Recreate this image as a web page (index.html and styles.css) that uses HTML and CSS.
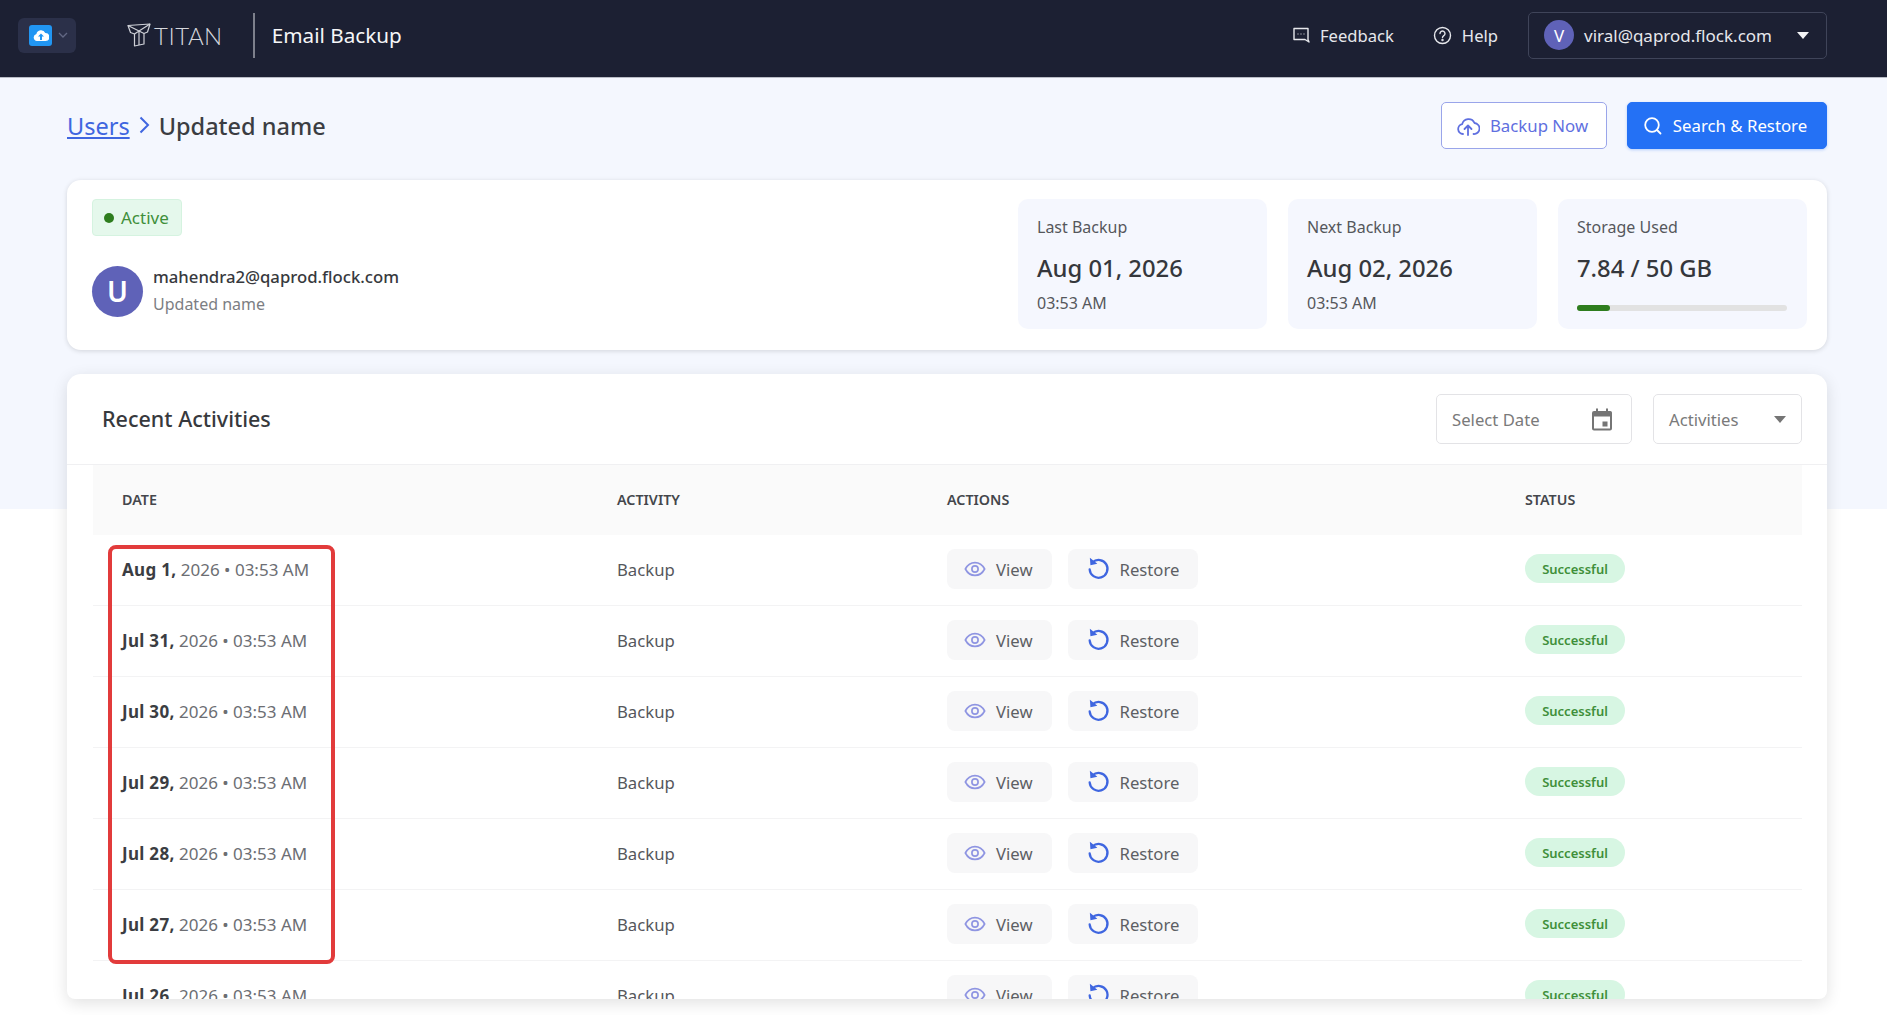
FILE: index.html
```html
<!DOCTYPE html>
<html lang="en">
<head>
    <meta charset="UTF-8">
    <meta name="viewport" content="width=device-width, initial-scale=1.0">
    <title>Email Backup</title>
    <link rel="stylesheet" href="styles.css">
</head>
<body>
    <svg class="icon-defs" width="0" height="0">
        <symbol id="i-eye" viewBox="0 0 24 24"><path d="M1.5 12C4 7.2 7.6 5 12 5s8 2.200 10.500 7C20 16.800 16.400 19 12 19S4 16.800 1.500 12z" fill="none" stroke="currentColor" stroke-width="1.800"/><circle cx="12" cy="12" r="3.400" fill="none" stroke="currentColor" stroke-width="1.800"/></symbol>
        <symbol id="i-restore" viewBox="0 0 24 24"><path d="M5.800 5.500A9.300 9.300 0 1 1 2.800 13" fill="none" stroke="currentColor" stroke-width="2.400" stroke-linecap="round"/><path d="M3 .8l.6 7.700 7.200-1.400z" fill="currentColor"/></symbol>
    </svg>

    <!-- Top bar -->
    <header class="topbar">
        <div class="topbar-left">
            <button class="app-switch">
                <span class="app-icon">
                    <svg width="16" height="12" viewBox="0 0 16 12"><path d="M4 12a3.500 3.500 0 0 1-.6-6.900A4.700 4.700 0 0 1 12.300 4 4 4 0 0 1 12.500 12z" fill="#fff"/><path d="M8 4.500L5 7.500h2V11h2V7.500h2z" fill="#2196f3"/></svg>
                </span>
                <svg width="12" height="8" viewBox="0 0 12 8"><path d="M2 2l4 4 4-4" fill="none" stroke="#626884" stroke-width="1.300"/></svg>
            </button>
            <div class="brand">
                <svg width="24" height="24" viewBox="0 0 24 24" fill="none" stroke="#cfd1d8" stroke-width="1.200" stroke-linejoin="round"><path d="M1 2.500L23 1l-2.500 8-3.500 1.500V21l-9.500 2V11L3.500 9.500z"/><path d="M1 2.500L12 8l11-7M12 8v14M7.500 11L12 8l5 2.500"/></svg>
                <span class="brand-name">TITAN</span>
            </div>
            <span class="app-title">Email Backup</span>
        </div>
        <nav class="topbar-right">
            <a class="top-link">
                <svg width="18" height="18" viewBox="0 0 18 18" fill="none" stroke="#e6e7ec" stroke-width="1.400" stroke-linejoin="round"><path d="M2 2.500h14V13.500l1 2.500-4-2.500H2z"/><path d="M5.500 8h1M8.500 8h1M11.500 8h1" stroke-width="1.200"/></svg>
                Feedback
            </a>
            <a class="top-link">
                <svg width="19" height="19" viewBox="0 0 19 19" fill="none" stroke="#e6e7ec" stroke-width="1.400"><circle cx="9.500" cy="9.500" r="8"/><path d="M7 7.500a2.500 2.500 0 1 1 3.800 2.100c-.9.600-1.300 1-1.300 2" stroke-linecap="round"/><circle cx="9.500" cy="14" r=".5"/></svg>
                Help
            </a>
            <div class="user-menu">
                <span class="user-avatar">V</span>
                <span class="user-email">viral@qaprod.flock.com</span>
                <span class="caret caret-white"></span>
            </div>
        </nav>
    </header>

    <main class="page">
        <div class="page-head">
            <div class="crumbs">
                <a class="crumb-link">Users</a>
                <svg class="crumb-sep" width="13" height="20" viewBox="0 0 13 20"><path d="M2.500 2.500L10 10l-7.500 7.500" fill="none" stroke="#3f66e0" stroke-width="2"/></svg>
                <span class="crumb-current">Updated name</span>
            </div>
            <div class="page-actions">
                <button class="btn btn-outline">
                    <svg width="24" height="20" viewBox="0 0 24 20" fill="none" stroke="currentColor" stroke-width="1.800" stroke-linecap="round" stroke-linejoin="round"><path d="M7 18a5 5 0 0 1-.8-9.900A6.500 6.500 0 0 1 18.500 7a5.500 5.500 0 0 1-1 11"/><path d="M12 19v-9M8.500 13L12 9.500l3.500 3.500"/></svg>
                    Backup Now
                </button>
                <button class="btn btn-primary">
                    <svg width="20" height="20" viewBox="0 0 20 20" fill="none" stroke="currentColor" stroke-width="1.800" stroke-linecap="round"><circle cx="9" cy="9" r="6.800"/><path d="M14 14l3.500 3.500"/></svg>
                    Search &amp; Restore
                </button>
            </div>
        </div>

        <!-- User summary -->
        <section class="card summary">
            <div class="summary-user">
                <span class="badge-active"><i class="dot"></i>Active</span>
                <div class="user-row">
                    <span class="avatar-big">U</span>
                    <div>
                        <div class="user-mail">mahendra2@qaprod.flock.com</div>
                        <div class="user-name">Updated name</div>
                    </div>
                </div>
            </div>
            <div class="stat">
                <div class="stat-label">Last Backup</div>
                <div class="stat-value">Aug 01, 2026</div>
                <div class="stat-sub">03:53 AM</div>
            </div>
            <div class="stat">
                <div class="stat-label">Next Backup</div>
                <div class="stat-value">Aug 02, 2026</div>
                <div class="stat-sub">03:53 AM</div>
            </div>
            <div class="stat">
                <div class="stat-label">Storage Used</div>
                <div class="stat-value">7.84 / 50 GB</div>
                <div class="progress"><div class="progress-fill" style="width: 15.700%"></div></div>
            </div>
        </section>

        <!-- Activity table -->
        <section class="card activities">
            <div class="activities-head">
                <h2>Recent Activities</h2>
                <div class="filters">
                    <div class="filter filter-date">
                        <span>Select Date</span>
                        <svg width="20" height="24" viewBox="0 0 20 24"><path d="M4 1.500h2V4h8V1.500h2V4h1.500A2 2 0 0 1 20 6v15.500a2 2 0 0 1-2 2H2a2 2 0 0 1-2-2V6a2 2 0 0 1 2-2h2zM2 9.500v12h16v-12z" fill="#757575"/><rect x="10.500" y="14.500" width="5" height="5" fill="#757575"/></svg>
                    </div>
                    <div class="filter filter-type">
                        <span>Activities</span>
                        <span class="caret caret-grey"></span>
                    </div>
                </div>
            </div>

            <div class="table">
                <div class="row row-head">
                    <div>DATE</div>
                    <div>ACTIVITY</div>
                    <div>ACTIONS</div>
                    <div>STATUS</div>
                </div>

                <div class="row">
                    <div class="cell-date"><b>Aug 1,</b> 2026 • 03:53 AM</div>
                    <div>Backup</div>
                    <div class="cell-actions">
                        <button class="act"><svg class="eye"><use href="#i-eye"/></svg>View</button>
                        <button class="act act-restore"><svg class="restore"><use href="#i-restore"/></svg>Restore</button>
                    </div>
                    <div class="cell-status"><span class="pill">Successful</span></div>
                </div>
                <div class="row">
                    <div class="cell-date"><b>Jul 31,</b> 2026 • 03:53 AM</div>
                    <div>Backup</div>
                    <div class="cell-actions">
                        <button class="act"><svg class="eye"><use href="#i-eye"/></svg>View</button>
                        <button class="act act-restore"><svg class="restore"><use href="#i-restore"/></svg>Restore</button>
                    </div>
                    <div class="cell-status"><span class="pill">Successful</span></div>
                </div>
                <div class="row">
                    <div class="cell-date"><b>Jul 30,</b> 2026 • 03:53 AM</div>
                    <div>Backup</div>
                    <div class="cell-actions">
                        <button class="act"><svg class="eye"><use href="#i-eye"/></svg>View</button>
                        <button class="act act-restore"><svg class="restore"><use href="#i-restore"/></svg>Restore</button>
                    </div>
                    <div class="cell-status"><span class="pill">Successful</span></div>
                </div>
                <div class="row">
                    <div class="cell-date"><b>Jul 29,</b> 2026 • 03:53 AM</div>
                    <div>Backup</div>
                    <div class="cell-actions">
                        <button class="act"><svg class="eye"><use href="#i-eye"/></svg>View</button>
                        <button class="act act-restore"><svg class="restore"><use href="#i-restore"/></svg>Restore</button>
                    </div>
                    <div class="cell-status"><span class="pill">Successful</span></div>
                </div>
                <div class="row">
                    <div class="cell-date"><b>Jul 28,</b> 2026 • 03:53 AM</div>
                    <div>Backup</div>
                    <div class="cell-actions">
                        <button class="act"><svg class="eye"><use href="#i-eye"/></svg>View</button>
                        <button class="act act-restore"><svg class="restore"><use href="#i-restore"/></svg>Restore</button>
                    </div>
                    <div class="cell-status"><span class="pill">Successful</span></div>
                </div>
                <div class="row">
                    <div class="cell-date"><b>Jul 27,</b> 2026 • 03:53 AM</div>
                    <div>Backup</div>
                    <div class="cell-actions">
                        <button class="act"><svg class="eye"><use href="#i-eye"/></svg>View</button>
                        <button class="act act-restore"><svg class="restore"><use href="#i-restore"/></svg>Restore</button>
                    </div>
                    <div class="cell-status"><span class="pill">Successful</span></div>
                </div>
                <div class="row">
                    <div class="cell-date"><b>Jul 26,</b> 2026 • 03:53 AM</div>
                    <div>Backup</div>
                    <div class="cell-actions">
                        <button class="act"><svg class="eye"><use href="#i-eye"/></svg>View</button>
                        <button class="act act-restore"><svg class="restore"><use href="#i-restore"/></svg>Restore</button>
                    </div>
                    <div class="cell-status"><span class="pill">Successful</span></div>
                </div>

                <!-- red annotation drawn over the date column -->
                <div class="highlight"></div>
            </div>
        </section>
    </main>
</body>
</html>
```

FILE: styles.css
```css
/* General body styling */
body {
    margin: 0;
    height: 1015px;
    overflow: hidden;
    font-family: "Noto Sans", "Open Sans", sans-serif;
    color: #333;
    background: linear-gradient(#f4f7fe 509px, #fff 509px);
}

button {
    font-family: inherit;
    cursor: pointer;
}

.icon-defs {
    position: absolute;
}

/* Top bar */
.topbar {
    height: 70px;
    box-sizing: content-box;
    background-color: #1c2033;
    border-bottom: 1px solid #b9bcc6;
    display: flex;
    justify-content: space-between;
    align-items: center;
    padding: 0 60px 7px 18px;
}

.topbar-left,
.topbar-right {
    display: flex;
    align-items: center;
}

.app-switch {
    width: 58px;
    height: 35px;
    padding: 0 0 0 11px;
    border: none;
    border-radius: 6px;
    background-color: #2b3049;
    display: flex;
    align-items: center;
    gap: 5px;
}

.app-icon {
    width: 23px;
    height: 21px;
    border-radius: 3px;
    background-color: #2196f3;
    display: flex;
    justify-content: center;
    align-items: center;
}

.brand {
    display: flex;
    align-items: center;
    gap: 3px;
    margin-left: 51px;
    padding-right: 30px;
    height: 45px;
    border-right: 2px solid #7d808c;
}

.brand-name {
    font-family: "Lato", sans-serif;
    font-weight: 300;
    font-size: 24px;
    color: #d5d7dd;
    letter-spacing: 0.5px;
}

.app-title {
    margin-left: 17px;
    font-size: 20.700px;
    color: #f5f6f8;
}

.top-link {
    display: flex;
    align-items: center;
    gap: 10px;
    margin-right: 39px;
    font-size: 16.600px;
    color: #e6e7ec;
}

.top-link:nth-child(2) {
    margin-right: 30px;
}

.user-menu {
    width: 299px;
    height: 47px;
    box-sizing: border-box;
    border: 1px solid #3f4459;
    border-radius: 5px;
    padding: 0 17px 0 15px;
    display: flex;
    align-items: center;
}

.user-avatar {
    width: 30px;
    height: 30px;
    border-radius: 50%;
    background-color: #5f62b8;
    color: #fff;
    font-size: 17px;
    display: flex;
    justify-content: center;
    align-items: center;
}

.user-email {
    flex: 1;
    margin-left: 10px;
    font-size: 17px;
    color: #e6e7ec;
}

.caret {
    width: 0;
    height: 0;
    border-left: 6.500px solid transparent;
    border-right: 6.500px solid transparent;
}

.caret-white {
    border-top: 7px solid #f2f3f6;
}

.caret-grey {
    border-top: 7px solid #757575;
}

/* Page content */
.page {
    padding: 24px 60px 0 67px;
}

.page-head {
    display: flex;
    justify-content: space-between;
    align-items: center;
    height: 47px;
    margin-bottom: 31px;
}

.crumbs {
    display: flex;
    align-items: center;
    gap: 8px;
    font-size: 23.500px;
}

.crumb-sep {
    margin-top: -2px;
}

.crumb-link {
    color: #3f66e0;
    text-decoration: underline;
}

.crumb-current {
    color: #3b3d42;
    font-weight: 500;
}

.page-actions {
    display: flex;
    gap: 20px;
}

.btn {
    height: 47px;
    box-sizing: border-box;
    border-radius: 5px;
    font-size: 16.800px;
    display: flex;
    justify-content: center;
    align-items: center;
    gap: 10px;
    padding: 0 4px 0 0;
}

.btn-outline {
    width: 166px;
    background-color: #fff;
    color: #5f6fe0;
    border: 1px solid #9aa5ea;
}

.btn-primary {
    width: 200px;
    background-color: #2471f5;
    color: #fff;
    border: 1px solid #2471f5;
    box-shadow: 0 1px 3px rgba(36, 113, 245, 0.3);
}

.card {
    background-color: #fff;
    border-radius: 14px;
    box-shadow: 0 1px 5px rgba(0, 0, 0, 0.14);
}

/* Summary card */
.summary {
    height: 170px;
    box-sizing: border-box;
    padding: 19px 20px 21px 25px;
    display: flex;
    gap: 21px;
    margin-bottom: 24px;
}

.summary-user {
    flex: 1;
}

.badge-active {
    display: flex;
    align-items: center;
    gap: 7px;
    height: 37px;
    width: 90px;
    box-sizing: border-box;
    padding-left: 11px;
    background-color: #e5f8ec;
    border: 1px solid #d5f3e0;
    border-radius: 4px;
    font-size: 17px;
    color: #3f8f3a;
}

.dot {
    width: 10px;
    height: 10px;
    border-radius: 50%;
    background-color: #2e7d1e;
}

.user-row {
    display: flex;
    align-items: center;
    gap: 10px;
    margin-top: 28px;
}

.avatar-big {
    width: 51px;
    height: 51px;
    border-radius: 50%;
    background-color: #5f62b8;
    color: #fff;
    font-size: 28px;
    font-weight: 600;
    display: flex;
    justify-content: center;
    align-items: center;
}

.user-mail {
    font-size: 16.700px;
    font-weight: 500;
    color: #37393d;
    line-height: 26px;
}

.user-name {
    font-size: 16px;
    color: #7c7e83;
    line-height: 28px;
}

.stat {
    width: 249px;
    box-sizing: border-box;
    background-color: #f5f7fe;
    border-radius: 10px;
    padding: 16px 19px 0;
}

.stat-label {
    font-size: 16px;
    color: #55575c;
    line-height: 24px;
}

.stat-value {
    font-size: 23.800px;
    font-weight: 500;
    color: #35373c;
    line-height: 34px;
    margin-top: 12px;
}

.stat-sub {
    font-size: 16px;
    color: #55575c;
    line-height: 24px;
    margin-top: 6px;
}

.progress {
    height: 6px;
    width: 210px;
    border-radius: 3px;
    background-color: #e2e2e2;
    margin-top: 20px;
}

.progress-fill {
    height: 100%;
    border-radius: 3px;
    background-color: #2e7d1e;
}

/* Activities card */
.activities {
    height: 625px;
    overflow: hidden;
    border-radius: 14px 14px 8px 8px;
    box-shadow: 0 4px 16px rgba(0, 0, 0, 0.12);
}

.activities-head {
    height: 91px;
    box-sizing: border-box;
    padding: 20px 25px 0 35px;
    display: flex;
    justify-content: space-between;
    border-bottom: 1px solid #f0f0f2;
}

.activities-head h2 {
    margin: 0;
    font-size: 21.500px;
    font-weight: 500;
    color: #37393d;
    line-height: 50px;
}

.filters {
    display: flex;
    gap: 21px;
}

.filter {
    height: 50px;
    box-sizing: border-box;
    border: 1px solid #e3e3e6;
    border-radius: 5px;
    display: flex;
    justify-content: space-between;
    align-items: center;
    padding: 0 19px 0 15px;
    font-size: 16.700px;
    color: #7a7a7a;
}

.filter-date {
    width: 196px;
}

.filter-type {
    width: 149px;
    padding-right: 15px;
}

/* Table rows */
.table {
    position: relative;
    margin: 0 25px 0 26px;
}

.row {
    display: grid;
    grid-template-columns: 495px 330px 578px 1fr;
    align-items: center;
    height: 71px;
    box-sizing: border-box;
    padding: 0 0 2px 29px;
    border-bottom: 1px solid #f3f3f4;
    font-size: 16.700px;
    color: #55575c;
}

.row-head {
    height: 70px;
    border-bottom: none;
    background-color: #fafafa;
    font-size: 14.300px;
    font-weight: 600;
    color: #44464b;
}

.cell-date b {
    font-weight: 700;
    color: #3b3d42;
    letter-spacing: 0.3px;
}

.cell-date {
    color: #6c6e73;
    font-size: 17px;
}

.cell-status {
    margin-top: -1px;
}

.cell-actions {
    display: flex;
    gap: 16px;
}

.act {
    height: 40px;
    padding: 0 19px 0 17px;
    border: none;
    border-radius: 8px;
    background-color: #f7f7f8;
    font-size: 16.700px;
    color: #5d5f64;
    display: flex;
    align-items: center;
    gap: 10px;
}

.act svg {
    width: 22px;
    height: 22px;
}

.act-restore {
    padding-left: 19px;
}

.act-restore svg {
    width: 23px;
    height: 23px;
    margin-top: -2px;
}

.eye {
    color: #8f95e2;
}

.restore {
    color: #3f66e0;
}

.pill {
    display: inline-flex;
    justify-content: center;
    align-items: center;
    width: 100px;
    height: 29px;
    border-radius: 15px;
    background-color: #d7f6e3;
    color: #3f8f3a;
    font-size: 13px;
    font-weight: 600;
}

.highlight {
    position: absolute;
    left: 15px;
    top: 80px;
    width: 227px;
    height: 419px;
    box-sizing: border-box;
    border: 4px solid #e23b3b;
    border-radius: 8px;
}
```
